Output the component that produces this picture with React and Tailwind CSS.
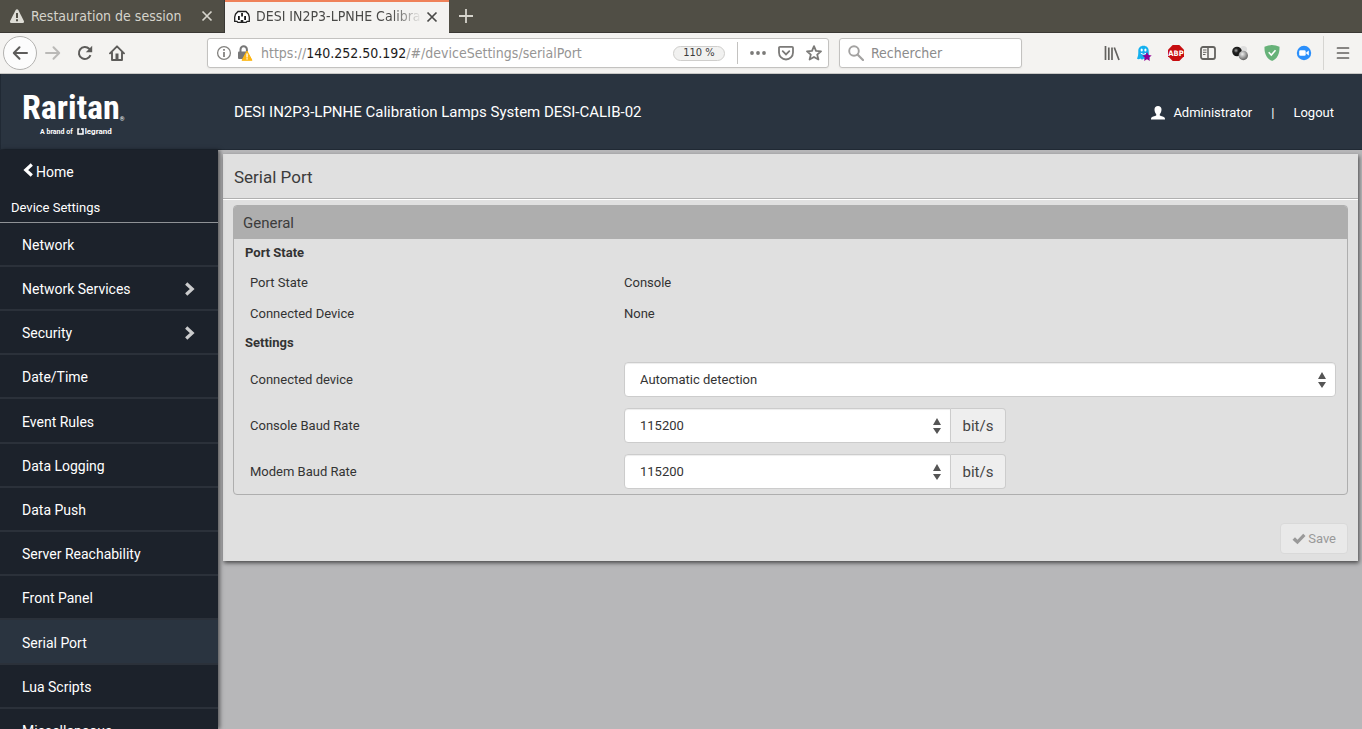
import React from "react";

const NAV_ITEMS = [
  { label: "Network" },
  { label: "Network Services", nested: true },
  { label: "Security", nested: true },
  { label: "Date/Time" },
  { label: "Event Rules" },
  { label: "Data Logging" },
  { label: "Data Push" },
  { label: "Server Reachability" },
  { label: "Front Panel" },
  { label: "Serial Port", active: true },
  { label: "Lua Scripts" },
  { label: "Miscellaneous" },
];

function CloseIcon({ className }) {
  return (
    <svg viewBox="0 0 12 12" className={className} aria-hidden="true">
      <path d="M1.5 1.5l9 9M10.5 1.5l-9 9" stroke="currentColor" strokeWidth="1.7" fill="none" />
    </svg>
  );
}

function Tabs() {
  return (
    <div className="flex h-[33px] items-stretch border-b border-[#3a3834] bg-[#504e45]">
      <div className="flex w-[225px] items-center border-r border-[#3a3834] pr-[11px] pl-[9px] text-[#d6d4cc]">
        <svg viewBox="0 0 16 16" className="h-4 w-4 shrink-0" aria-hidden="true">
          <path d="M8 1.200c.6 0 1 .3 1.300.8l5.600 11c.5 1-.1 2-1.200 2H2.300c-1.100 0-1.700-1-1.200-2L6.700 2c.3-.5.7-.8 1.300-.8z" fill="#deddd6" />
          <path d="M7 5h2v5H7zM7 11.300h2v1.900H7z" fill="#504e45" />
        </svg>
        <span className="ml-1.5 flex-1 truncate">Restauration de session</span>
        <button aria-label="Fermer l’onglet" className="shrink-0">
          <CloseIcon className="h-3 w-3" />
        </button>
      </div>
      <div className="-mb-px flex w-[224px] items-center border-t-2 border-[#ef8159] bg-[#f4f3f1] pr-[11px] pb-[2px] pl-[9px] text-[#4a4a48]">
        <svg viewBox="0 0 16 14" className="h-[14px] w-4 shrink-0" aria-hidden="true">
          <path d="M4 1.500h8l2.500 2.700L15.300 7v4.300H13l-.8 1H3.800l-.8-1H.7V7l.8-2.800z" fill="#fff" stroke="#222" strokeWidth="1.300" />
          <path d="M7.200 3h1.700v3.500H7.200zM4 6h1.800v4H4zM10.200 6H12v4h-1.800z" fill="#111" />
          <path d="M6.700 12.500V10h2.600v2.500z" fill="#222" />
        </svg>
        <span className="ml-1.5 flex-1 overflow-hidden whitespace-nowrap [mask-image:linear-gradient(to_right,black_82%,transparent)]">
          DESI IN2P3-LPNHE Calibration
        </span>
        <button aria-label="Fermer l’onglet" className="ml-1 shrink-0">
          <CloseIcon className="h-3 w-3" />
        </button>
      </div>
      <button aria-label="Nouvel onglet" className="ml-[9px] self-center text-[#d6d4cc]">
        <svg viewBox="0 0 16 16" className="h-4 w-4" aria-hidden="true">
          <path d="M8 1v14M1 8h14" stroke="currentColor" strokeWidth="1.800" />
        </svg>
      </button>
    </div>
  );
}

function Extensions() {
  return (
    <div className="ml-auto flex items-center gap-4 text-[#63625f]">
      <svg viewBox="0 0 16 16" className="h-4 w-4" aria-hidden="true">
        <path d="M1.500 1v14M4.800 2.500V15M8 2.500V15M10.300 2.500L15 15" stroke="currentColor" strokeWidth="1.700" />
      </svg>
      <svg viewBox="0 0 16 16" className="h-4 w-4" aria-hidden="true">
        <path d="M7.500.8c3.300 0 5.200 2.200 5.200 5.200 0 3.500.3 5 1.300 7.500-1.500.8-2.400 0-3-.4-1 1.500-2.200 1.500-3.200.3-1.100 1.400-2.500 1.300-3.300 0-1 .8-2.400 1-3.500.3C2.200 11 2.300 9.500 2.300 6c0-3 1.900-5.200 5.200-5.200z" fill="#14b0ef" />
        <ellipse cx="5.700" cy="5" rx="1.100" ry="1.500" fill="#fff" />
        <ellipse cx="9.400" cy="5" rx="1.100" ry="1.500" fill="#fff" />
        <path d="M4.800 8.300q2.700 2.200 5.400 0" stroke="#fff" strokeWidth="1" fill="none" />
        <path d="M11 7l1.400 3 3.300.4-2.500 2.200.7 3.300-2.900-1.700-2.900 1.700.7-3.300-2.500-2.200 3.300-.4z" fill="#930194" />
      </svg>
      <svg viewBox="0 0 16 16" className="h-4 w-4" aria-hidden="true">
        <path d="M4.700 0h6.600L16 4.700v6.600L11.300 16H4.700L0 11.300V4.700z" fill="#c70d10" />
        <text x="8" y="10.800" textAnchor="middle" fontSize="7.500" fontWeight="bold" fill="#fff">ABP</text>
      </svg>
      <svg viewBox="0 0 16 16" className="h-4 w-4" aria-hidden="true">
        <rect x="1" y="2" width="14" height="12" rx="2" fill="none" stroke="currentColor" strokeWidth="1.800" />
        <path d="M8 2v12" stroke="currentColor" strokeWidth="1.500" />
        <path d="M3 5h3.500M3 7.300h3.500M3 9.500h2.500" stroke="currentColor" />
      </svg>
      <svg viewBox="0 0 16 16" className="h-4 w-4" aria-hidden="true">
        <defs>
          <radialGradient id="ballDark" cx=".4" cy=".4" r=".6">
            <stop offset="0" stopColor="#aaa" />
            <stop offset=".4" stopColor="#222" />
            <stop offset="1" stopColor="#111" />
          </radialGradient>
          <radialGradient id="ballGrey" cx=".4" cy=".35" r=".7">
            <stop offset="0" stopColor="#eee" />
            <stop offset="1" stopColor="#555" />
          </radialGradient>
        </defs>
        <circle cx="11.500" cy="4.500" r="3.600" fill="#dedede" />
        <circle cx="5" cy="6.500" r="4.800" fill="url(#ballDark)" />
        <circle cx="11.300" cy="10.500" r="4.700" fill="url(#ballGrey)" />
      </svg>
      <svg viewBox="0 0 16 16" className="h-4 w-4" aria-hidden="true">
        <path d="M8 0c2.500.2 5 .8 7.500 1.700C15.700 8 14 13 8 16 2 13 .3 8 .5 1.700 3 .8 5.500.2 8 0z" fill="#67b279" />
        <path d="M4.700 7.200l2.600 2.900 4.200-4.900" stroke="#fff" strokeWidth="1.500" fill="none" />
      </svg>
      <svg viewBox="0 0 16 16" className="h-4 w-4" aria-hidden="true">
        <circle cx="8" cy="8" r="7.200" fill="#2b8ffb" />
        <rect x="3.200" y="5.300" width="6.500" height="5.400" rx="1.300" fill="#fff" />
        <path d="M10.200 7.400l2.600-1.900v5l-2.600-1.900z" fill="#fff" />
      </svg>
      <div className="-mr-[5px] -ml-[5px] h-[34px] w-px bg-[#d6d5d2]" />
      <button aria-label="Menu">
        <svg viewBox="0 0 16 16" className="h-4 w-4" aria-hidden="true">
          <path d="M2.500 3h11M2.500 8h11M2.500 13h11" stroke="currentColor" strokeWidth="1.700" strokeLinecap="round" />
        </svg>
      </button>
    </div>
  );
}

function Toolbar() {
  return (
    <div className="flex h-[41px] items-center border-b border-[#c9c8c6] bg-[#f4f3f1] pr-[11px] pl-[3px] text-[#5d5c5a]">
      <button aria-label="Page précédente" className="flex h-[34px] w-[34px] items-center justify-center rounded-full border border-[#b3b2b0] bg-[#fcfcfc]">
        <svg viewBox="0 0 16 16" className="h-4 w-4" aria-hidden="true">
          <path d="M15 8H2M7.500 2.300L1.800 8l5.700 5.700" fill="none" stroke="currentColor" strokeWidth="2" strokeLinecap="round" strokeLinejoin="round" />
        </svg>
      </button>
      <button aria-label="Page suivante" className="mr-px ml-2 text-[#bab9b7]">
        <svg viewBox="0 0 16 16" className="h-4 w-4" aria-hidden="true">
          <path d="M1 8h13M8.500 2.300L14.200 8l-5.700 5.700" fill="none" stroke="currentColor" strokeWidth="2" strokeLinecap="round" strokeLinejoin="round" />
        </svg>
      </button>
      <button aria-label="Actualiser" className="ml-[15px]">
        <svg viewBox="0 0 16 16" className="h-4 w-4" aria-hidden="true">
          <path d="M13.500 10.200A6 6 0 1 1 12.200 3.800L14 5.600" fill="none" stroke="currentColor" strokeWidth="2" />
          <path d="M15.200.8v6.400H8.800z" fill="currentColor" />
        </svg>
      </button>
      <button aria-label="Accueil" className="ml-4">
        <svg viewBox="0 0 16 16" className="h-4 w-4" aria-hidden="true">
          <path d="M1 8.300L8 1.300l7 7M3 7.500V15h10V7.500" fill="none" stroke="currentColor" strokeWidth="1.900" strokeLinejoin="round" strokeLinecap="round" />
          <path d="M6.500 8.500h3V15h-3z" fill="currentColor" />
        </svg>
      </button>
      <div className="ml-[82px] flex h-[30px] w-[622px] items-center rounded-[3px] border border-[#c3c2c0] bg-white pr-1.5 pl-2 shadow-xs">
        <svg viewBox="0 0 16 16" className="h-4 w-4 shrink-0 text-[#83827f]" aria-hidden="true">
          <circle cx="8" cy="8" r="6.400" fill="none" stroke="currentColor" strokeWidth="1.300" />
          <path d="M7.100 7h1.800v5H7.100zM7.100 4h1.800v1.800H7.100z" fill="currentColor" />
        </svg>
        <svg viewBox="0 0 16 16" className="ml-[5px] h-4 w-4 shrink-0" aria-hidden="true">
          <path d="M3.500 8V4.500a3.200 3.200 0 0 1 6.400 0V8" fill="none" stroke="#777" strokeWidth="2" />
          <rect x="1" y="6.500" width="10" height="7.500" rx="1" fill="#777" />
          <path d="M10 6l5 9.300H5z" fill="#fdb614" stroke="#fdb614" strokeWidth="1" strokeLinejoin="round" />
          <path d="M9.400 8.500h1.300v4H9.400zM9.400 13.300h1.300v1.300H9.400z" fill="#fff" />
        </svg>
        <span className="ml-2 flex-1 truncate text-[#969594]">
          https://<span className="text-[#1c1c1c]">140.252.50.192</span>/#/deviceSettings/serialPort
        </span>
        <span className="flex h-[15px] w-[52px] items-center justify-center rounded-full border border-[#cfcecc] bg-[#f1f1f0] text-[11px] text-[#3c3c3c]">
          110 %
        </span>
        <div className="ml-3 h-[22px] w-px bg-[#c3c2c0]" />
        <div className="ml-3 flex items-center gap-3 text-[#7b7a78]">
          <svg viewBox="0 0 16 16" className="h-4 w-4" aria-hidden="true">
            <circle cx="2" cy="8" r="1.900" fill="currentColor" />
            <circle cx="8" cy="8" r="1.900" fill="currentColor" />
            <circle cx="14" cy="8" r="1.900" fill="currentColor" />
          </svg>
          <svg viewBox="0 0 16 16" className="h-4 w-4" aria-hidden="true">
            <path d="M2 1.800h12a1 1 0 0 1 1 1v4.700a7 7 0 0 1-14 0V2.800a1 1 0 0 1 1-1z" fill="none" stroke="currentColor" strokeWidth="1.800" />
            <path d="M4.700 6.200L8 9.400l3.300-3.200" fill="none" stroke="currentColor" strokeWidth="1.800" strokeLinecap="round" />
          </svg>
          <svg viewBox="0 0 16 16" className="h-4 w-4" aria-hidden="true">
            <path d="M8 1.200l2 4.600 5 .5-3.800 3.300 1.200 4.900L8 11.900l-4.400 2.600 1.200-4.900L1 6.300l5-.5z" fill="none" stroke="currentColor" strokeWidth="1.800" strokeLinejoin="round" />
          </svg>
        </div>
      </div>
      <label className="ml-2.5 flex h-[30px] w-[183px] items-center rounded-[3px] border border-[#c3c2c0] bg-white pl-2 shadow-xs">
        <svg viewBox="0 0 16 16" className="h-4 w-4 shrink-0 text-[#a3a2a1]" aria-hidden="true">
          <circle cx="6" cy="6" r="4.800" fill="none" stroke="currentColor" strokeWidth="1.900" />
          <path d="M9.500 9.500L15 15" stroke="currentColor" strokeWidth="2.200" strokeLinecap="round" />
        </svg>
        <input
          type="search"
          aria-label="Rechercher"
          placeholder="Rechercher"
          className="ml-[7px] min-w-0 flex-1 bg-transparent outline-none placeholder:text-[#8b8b8b]"
        />
      </label>
      <Extensions />
    </div>
  );
}

function Logo() {
  return (
    <div className="flex w-[233px] flex-col items-start gap-1 pl-[21px] text-white">
      <div className="flex items-end">
        <span className="font-['Roboto_Condensed','Liberation_Sans_Narrow',sans-serif] text-[34px] leading-[34px] font-bold">Raritan</span>
        <span className="text-[6px] leading-[10px]">®</span>
      </div>
      <div className="flex items-center pl-[18px] text-[7px] leading-2 font-bold">
        <span>A brand of</span>
        <svg viewBox="0 0 7 7" className="mr-px ml-1 h-[7px] w-[7px]" aria-hidden="true">
          <path d="M2.500 1H1v5h5V1H4" fill="none" stroke="currentColor" strokeWidth="1.500" />
        </svg>
        <span className="text-[8px]">legrand</span>
      </div>
    </div>
  );
}

function Header() {
  return (
    <header className="flex h-[76px] shrink-0 items-center border-b border-l border-[#202934] bg-[#2a3440] pt-0.5 pr-7 text-white">
      <Logo />
      <h1 className="text-[15px]">DESI IN2P3-LPNHE Calibration Lamps System DESI-CALIB-02</h1>
      <div className="ml-auto flex items-center text-[13px]">
        <svg viewBox="0 0 14 14" className="mr-2 h-[14px] w-[14px]" aria-hidden="true">
          <path d="M7 0c2.200 0 3.500 1.400 3.500 3.600 0 1.800-.6 3.600-1.700 4.500v1.400c1.200.7 4.700 1.300 5 2.500.2.500.2 1.300.2 1.500H0c0-.2 0-1 .2-1.500.3-1.200 3.800-1.800 5-2.500V8.100C4.100 7.200 3.500 5.400 3.500 3.600 3.500 1.400 4.800 0 7 0z" fill="currentColor" />
        </svg>
        <a href="#/user">Administrator</a>
        <span className="mx-[19px]">|</span>
        <a href="#/logout">Logout</a>
      </div>
    </header>
  );
}

function Sidebar() {
  return (
    <nav className="z-10 w-[218px] shrink-0 overflow-hidden bg-[#1c222b] text-sm text-white shadow-[2px_0_4px_rgba(0,0,0,0.5)]">
      <a href="#/home" className="flex h-[43px] items-center gap-[2px] pl-[23px]">
        <svg viewBox="0 0 11 14" className="-mt-1 h-[14px] w-[11px]" aria-hidden="true">
          <path d="M8.800 1.500L2.800 7l6 5.500" fill="none" stroke="currentColor" strokeWidth="3.200" />
        </svg>
        Home
      </a>
      <h2 className="h-[30px] border-b border-[#8f9296] pt-[5px] pl-[11px] text-[13px] leading-5">Device Settings</h2>
      <ul>
        {NAV_ITEMS.map((item) => (
          <li key={item.label} className="h-11 nth-[5n]:h-[45px]">
            <a
              href="#/deviceSettings"
              aria-current={item.active ? "page" : undefined}
              className={
                "flex h-full items-center justify-between border-b-2 border-[#2b313a] pt-0.5 pr-[23px] pl-[22px] " +
                (item.active ? "bg-[#2a3440]" : "")
              }
            >
              {item.label}
              {item.nested && (
                <svg viewBox="0 0 11 14" className="h-[14px] w-[11px] text-[#cbcccd]" aria-hidden="true">
                  <path d="M2.200 1.500l6 5.500-6 5.500" fill="none" stroke="currentColor" strokeWidth="3.200" />
                </svg>
              )}
            </a>
          </li>
        ))}
      </ul>
    </nav>
  );
}

function SelectBox({ id, value, unit }) {
  return (
    <div className={unit ? "flex w-[382px] max-w-full" : "flex"}>
      <div className="relative flex-1">
        <select
          id={id}
          defaultValue={value}
          className={
            "h-[35px] w-full appearance-none border border-[#ccc] bg-white px-[15px] text-[#333] shadow-[inset_0_1px_1px_rgba(0,0,0,0.075)] " +
            (unit ? "rounded-l" : "rounded")
          }
        >
          <option>{value}</option>
        </select>
        <svg viewBox="0 0 10 18" className="pointer-events-none absolute top-[9px] right-[9px] h-[18px] w-[10px]" aria-hidden="true">
          <path d="M5 1l4 7H1zM5 17l4-6H1z" fill="#555" />
        </svg>
      </div>
      {unit && (
        <span className="flex w-[55px] items-center justify-center rounded-r border border-l-0 border-[#ccc] bg-[#eee] text-[15px] text-[#444]">
          {unit}
        </span>
      )}
    </div>
  );
}

function InfoRow({ label, value }) {
  return (
    <div className="grid grid-cols-[1fr_2fr] gap-x-[18px]">
      <dt>{label}</dt>
      <dd>{value}</dd>
    </div>
  );
}

function FieldRow({ id, label, value, unit }) {
  return (
    <div className="grid grid-cols-[1fr_2fr] items-center gap-x-[18px]">
      <label htmlFor={id}>{label}</label>
      <SelectBox id={id} value={value} unit={unit} />
    </div>
  );
}

function SerialPortPanel() {
  return (
    <form className="bg-[#e0e0e0] text-[13px] leading-5 text-[#333] shadow-[1px_2px_4px_rgba(0,0,0,0.6)]">
      <h2 className="border-b border-[#b0b0b0] px-[11px] pt-2.5 pb-2 text-[17px] leading-[26px] text-[#3c3c3c]">Serial Port</h2>
      <div className="border-t border-white px-2.5 pt-[5px] pb-[7px]">
        <section className="overflow-hidden rounded border border-[#aeaeae]">
          <h3 className="bg-[#aeaeae] px-[9px] pt-[7px] pb-[6px] text-[15px] text-[#3c3c3c]">General</h3>
          <div className="pt-1 pr-[11px] pb-[5px] pl-[16px]">
            <h4 className="-ml-[5px] font-bold">Port State</h4>
            <dl className="flex flex-col gap-[11px] pt-2.5 pb-[9px]">
              <InfoRow label="Port State" value="Console" />
              <InfoRow label="Connected Device" value="None" />
            </dl>
            <h4 className="-ml-[5px] font-bold">Settings</h4>
            <div className="flex flex-col gap-[11px] pt-[9px]">
              <FieldRow id="device" label="Connected device" value="Automatic detection" />
              <FieldRow id="console-rate" label="Console Baud Rate" value="115200" unit="bit/s" />
              <FieldRow id="modem-rate" label="Modem Baud Rate" value="115200" unit="bit/s" />
            </div>
          </div>
        </section>
        <div className="mt-7 flex justify-end">
          <button type="submit" disabled className="flex h-[31px] items-center gap-0.5 rounded border border-[#d9d9d9] bg-[#e9e9e9] px-[11px] text-[#999]">
            <svg viewBox="0 0 14 12" className="h-3 w-[14px]" aria-hidden="true">
              <path d="M0.500 6.800L3 4.300l2.500 2.500L11.200.8l2.300 2.200-8 8.300z" fill="currentColor" />
            </svg>
            Save
          </button>
        </div>
      </div>
    </form>
  );
}

export default function App() {
  return (
    <div className="flex h-screen flex-col overflow-hidden bg-[#b7b7b9] font-['Roboto',sans-serif]">
      <div className="shrink-0 font-['DejaVu_Sans_Condensed','DejaVu_Sans',sans-serif] text-[14px]">
        <Tabs />
        <Toolbar />
      </div>
      <Header />
      <div className="flex min-h-0 flex-1">
        <Sidebar />
        <main className="min-w-0 flex-1 overflow-hidden pt-1 pr-1 pl-[5px]">
          <SerialPortPanel />
        </main>
      </div>
    </div>
  );
}
